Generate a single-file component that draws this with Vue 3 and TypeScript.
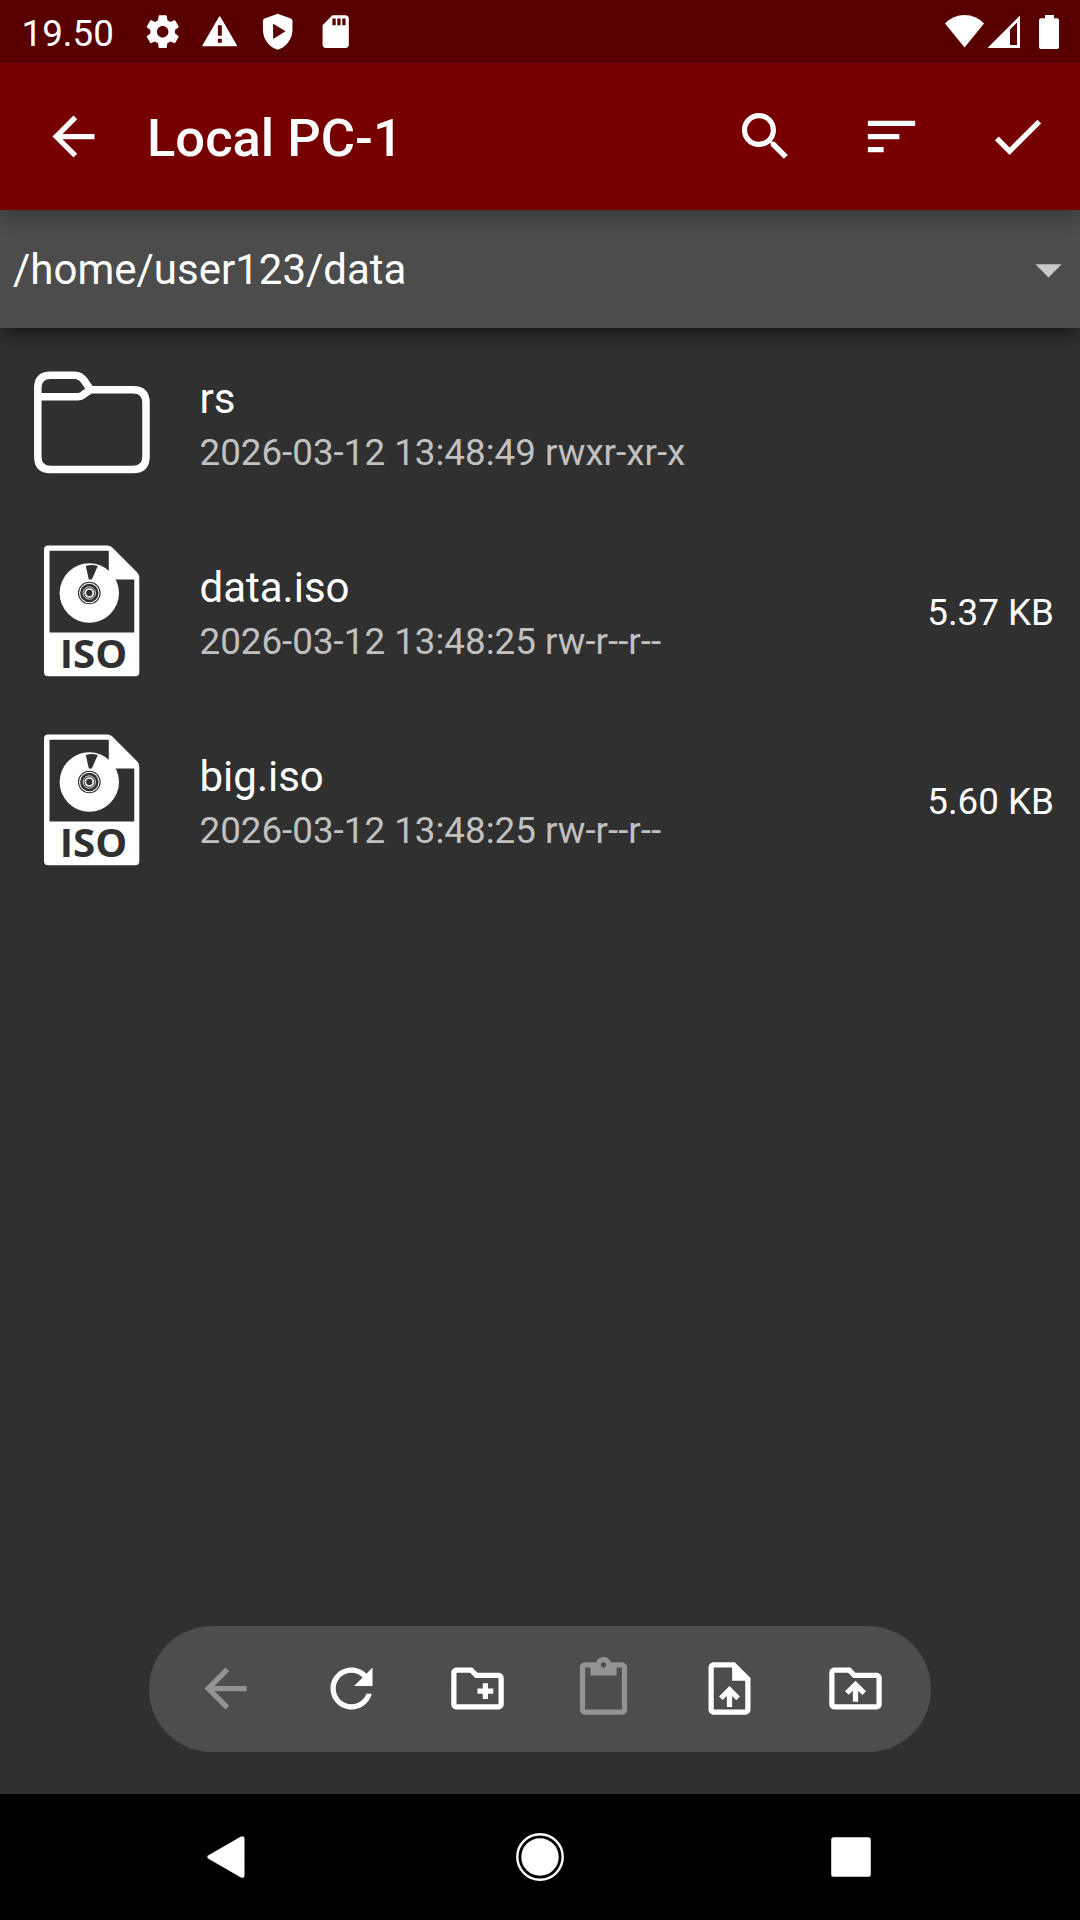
<script setup lang="ts">
interface FileEntry {
  name: string
  details: string
  size?: string
  kind: 'folder' | 'iso'
}

interface Tool {
  label: string
  path: string
  disabled?: boolean
}

const entries: FileEntry[] = [
  { name: 'rs', details: '2026-03-12 13:48:49 rwxr-xr-x', kind: 'folder' },
  { name: 'data.iso', details: '2026-03-12 13:48:25 rw-r--r--', size: '5.37 KB', kind: 'iso' },
  { name: 'big.iso', details: '2026-03-12 13:48:25 rw-r--r--', size: '5.60 KB', kind: 'iso' },
]

const arrowBack = 'M20 11H7.83l5.59-5.59L12 4l-8 8 8 8 1.41-1.41L7.83 13H20v-2z'

const actions: Tool[] = [
  {
    label: 'Search',
    path: 'M15.5 14h-.79l-.28-.27C15.41 12.59 16 11.11 16 9.5 16 5.91 13.09 3 9.5 3S3 5.91 3 9.5 5.91 16 9.5 16c1.61 0 3.09-.59 4.23-1.57l.27.28v.79l5 4.99L20.49 19l-4.99-5zm-6 0C7.01 14 5 11.99 5 9.5S7.01 5 9.5 5 14 7.01 14 9.5 11.99 14 9.5 14z',
  },
  { label: 'Sort', path: 'M3 18h6v-2H3v2zM3 6v2h18V6H3zm0 7h12v-2H3v2z' },
  { label: 'Done', path: 'M9 16.17L4.83 12l-1.42 1.41L9 19 21 7l-1.41-1.41z' },
]

const tools: Tool[] = [
  { label: 'Back', path: arrowBack, disabled: true },
  {
    label: 'Refresh',
    path: 'M17.65 6.35C16.2 4.9 14.21 4 12 4c-4.42 0-7.99 3.58-7.99 8s3.57 8 7.99 8c3.73 0 6.84-2.55 7.73-6h-2.08c-.82 2.33-3.04 4-5.65 4-3.31 0-6-2.69-6-6s2.69-6 6-6c1.66 0 3.14.69 4.22 1.78L13 11h7V4l-2.35 2.35z',
  },
  {
    label: 'New folder',
    path: 'M20 6h-8l-2-2H4c-1.11 0-1.99.89-1.99 2L2 18c0 1.11.89 2 2 2h16c1.11 0 2-.89 2-2V8c0-1.11-.89-2-2-2zm0 12H4V6h5.17l2 2H20v10zm-8-4h2v2h2v-2h2v-2h-2v-2h-2v2h-2z',
  },
  {
    label: 'Paste',
    disabled: true,
    path: 'M19 2h-4.18C14.4.84 13.3 0 12 0c-1.3 0-2.4.84-2.82 2H5c-1.1 0-2 .9-2 2v16c0 1.1.9 2 2 2h14c1.1 0 2-.9 2-2V4c0-1.1-.9-2-2-2zm-7 0c.55 0 1 .45 1 1s-.45 1-1 1-1-.45-1-1 .45-1 1-1zm7 18H5V4h2v3h10V4h2v16z',
  },
  {
    label: 'Upload file',
    path: 'M14 2H6c-1.1 0-1.99.9-1.99 2L4 20c0 1.1.89 2 1.99 2H18c1.1 0 2-.9 2-2V8l-6-6zm4 18H6V4h7v5h5v11zM8 15.01l1.41 1.41L11 14.84V19h2v-4.16l1.59 1.59L16 15.01 12.01 11 8 15.01z',
  },
  {
    label: 'Upload folder',
    path: 'M20 6h-8l-2-2H4c-1.1 0-1.99.9-1.99 2L2 18c0 1.1.9 2 2 2h16c1.1 0 2-.9 2-2V8c0-1.1-.9-2-2-2zm0 12H4V6h5.17l2 2H20v10zM9.41 14.42L11 12.84V17h2v-4.16l1.59 1.59L16 13.01 12.01 9 8 13.01l1.41 1.41z',
  },
]
</script>

<template>
  <div class="screen">
    <header class="status">
      <span class="clock">19.50</span>
      <div class="notices">
        <svg viewBox="0 0 24 24"><path d="M19.43 12.98c.04-.32.07-.64.07-.98s-.03-.66-.07-.98l2.11-1.65c.19-.15.24-.42.12-.64l-2-3.46c-.12-.22-.39-.3-.61-.22l-2.49 1c-.52-.4-1.08-.73-1.69-.98l-.38-2.65C14.46 2.18 14.25 2 14 2h-4c-.25 0-.46.18-.49.42l-.38 2.65c-.61.25-1.17.59-1.69.98l-2.49-1c-.23-.09-.49 0-.61.22l-2 3.46c-.13.22-.07.49.12.64l2.11 1.65c-.04.32-.07.65-.07.98s.03.66.07.98l-2.11 1.65c-.19.15-.24.42-.12.64l2 3.46c.12.22.39.3.61.22l2.49-1c.52.4 1.08.73 1.69.98l.38 2.65c.03.24.24.42.49.42h4c.25 0 .46-.18.49-.42l.38-2.65c.61-.25 1.17-.59 1.69-.98l2.49 1c.23.09.49 0 .61-.22l2-3.46c.12-.22.07-.49-.12-.64l-2.11-1.65zM12 15.5c-1.93 0-3.5-1.57-3.5-3.5s1.57-3.5 3.5-3.5 3.5 1.57 3.5 3.5-1.57 3.5-3.5 3.5z" /></svg>
        <svg viewBox="0 0 24 24"><path fill-rule="evenodd" d="M1.8 20.9q-.6 0-.3-.6L11.6 2.9q.4-.6.8 0l10.1 17.4q.3.6-.3.6zM10.9 8.1v6.4h2.4V8.1zM10.9 16.3v2.5h2.4v-2.5z" /></svg>
        <svg viewBox="0 0 24 24"><path fill-rule="evenodd" d="M12 1L4 4Q3 4.4 3 5.4V11c0 5.5 3.8 10.6 9 12 5.2-1.4 9-6.5 9-12V5.4q0-1-1-1.4zM9.200 7.200v9.200L16.800 11.800z" /></svg>
        <svg viewBox="0 0 24 24"><path d="M18 2h-8L4.020 8 4 20c0 1.100.9 2 2 2h12c1.100 0 2-.9 2-2V4c0-1.100-.9-2-2-2zm-6 6h-2V4h2v4zm3 0h-2V4h2v4zm3 0h-2V4h2v4z" /></svg>
      </div>
      <svg class="radio" viewBox="0 0 116 36">
        <path d="M0 9.500Q8 1 19.500 1T39 9.500L19.500 33.500z" />
        <path fill-rule="evenodd" d="M42.500 34L75 1.500V34zM65 15.500V31h7V8.500z" />
        <path d="M100 1h9v3.200h3q2 0 2 2V33q0 2-2 2H96q-2 0-2-2V6.200q0-2 2-2h4z" />
      </svg>
    </header>

    <nav class="appbar">
      <svg class="icon" viewBox="0 0 24 24" aria-label="Back"><path :d="arrowBack" /></svg>
      <h1>Local PC-1</h1>
      <div class="actions">
        <svg v-for="a in actions" :key="a.label" class="icon" viewBox="0 0 24 24" :aria-label="a.label">
          <path :d="a.path" />
        </svg>
      </div>
    </nav>

    <div class="pathbar">
      <span>/home/user123/data</span>
      <svg class="icon caret" viewBox="0 0 24 24"><path d="M7 10l5 5 5-5z" /></svg>
    </div>

    <main class="list">
      <div v-for="e in entries" :key="e.name" class="row">
        <svg v-if="e.kind === 'folder'" class="kind" viewBox="0 0 144 144">
          <g fill="none" stroke="#fff" stroke-width="7.500" stroke-linejoin="round">
            <path d="M18.800 36V106.500Q18.800 119.500 31.500 119.500H114Q127 119.500 127 106.500V52.700Q127 39.700 114 39.700H71.500L65.500 31Q61.500 25.200 55.500 25.200H31.500Q18.800 25.200 18.800 38" />
            <path d="M18.800 46.800H58.500Q61.500 46.800 64 44.900L71.500 39.700" />
          </g>
        </svg>
        <svg v-else class="kind" viewBox="4.700 0 144 144">
          <path fill="#fff" fill-rule="evenodd" d="M30 6.500H93Q96 6.500 98 8.500L122.500 33Q125 35.500 125 38.500V133Q125 137.300 121 137.300H34Q29.700 137.300 29.700 133V10.500Q29.700 6.500 34 6.500zM35.200 11.800V93.500H120V40.500H94.500V11.800z" />
          <circle cx="75" cy="54" r="29.700" fill="#fff" />
          <path d="M71.500 27Q77.500 25 83.500 27L77.500 40.500H74.500z" fill="#303030" />
          <circle cx="75" cy="54" r="10.800" fill="none" stroke="#303030" stroke-width="1.100" />
          <circle cx="75" cy="54" r="9.200" fill="#303030" />
          <circle cx="75" cy="54" r="6.200" fill="none" stroke="#fff" stroke-width=".8" />
          <circle cx="75" cy="54" r="4" fill="none" stroke="#fff" stroke-width="1.700" />
          <text x="45.500" y="129.200" textLength="67.500" lengthAdjust="spacingAndGlyphs">ISO</text>
        </svg>
        <div class="info">
          <div class="name">{{ e.name }}</div>
          <div class="details">{{ e.details }}</div>
        </div>
        <div v-if="e.size" class="size">{{ e.size }}</div>
      </div>
    </main>

    <div class="toolbar">
      <svg
        v-for="t in tools"
        :key="t.label"
        class="icon"
        :class="{ disabled: t.disabled }"
        viewBox="0 0 24 24"
        :aria-label="t.label"
      >
        <path :d="t.path" />
      </svg>
    </div>

    <footer class="navbar">
      <svg viewBox="0 0 48 48"><path d="M6.500 22.200L38.500 3.700Q42.500 2 42.500 6V42Q42.500 46 38.500 44.300L6.500 25.800Q4 24 6.500 22.200z" /></svg>
      <svg viewBox="0 0 48 48">
        <circle cx="24" cy="24" r="22.700" fill="none" stroke="#fff" stroke-width="2.400" />
        <circle cx="24" cy="24" r="18.700" />
      </svg>
      <svg viewBox="0 0 48 48"><rect x="3.200" y="4.200" width="39.600" height="39.600" rx="2.500" /></svg>
    </footer>
  </div>
</template>

<style>
body {
  background: #303030;
}
</style>

<style scoped>
.screen {
  display: flex;
  flex-direction: column;
  width: 1080px;
  height: 1920px;
  overflow: hidden;
  background: #303030;
  color: #fff;
  font-family: Roboto, sans-serif;
}

svg {
  display: block;
  flex: none;
  fill: #fff;
}

.icon {
  width: 63px;
  height: 63px;
}

.status {
  display: flex;
  align-items: center;
  flex: none;
  height: 63px;
  box-sizing: border-box;
  padding: 0 19px 0 21.5px;
  background: #580000;
}

.clock {
  width: 121px;
  padding-top: 3px;
  font-size: 36.75px;
  line-height: 43px;
}

.notices {
  display: flex;
  gap: 18.6px;
}

.notices svg {
  width: 39.4px;
  height: 39.4px;
}

.radio {
  width: 116px;
  height: 36px;
  margin-left: auto;
}

.appbar {
  position: relative;
  z-index: 2;
  display: flex;
  align-items: center;
  flex: none;
  height: 147px;
  box-sizing: border-box;
  padding: 0 31.5px 0 42px;
  background: #760000;
  box-shadow: 0 8px 20px -3px rgba(0, 0, 0, 0.32);
}

h1 {
  margin: 0 0 0 42px;
  padding-top: 3px;
  font-size: 52.5px;
  font-weight: 500;
  line-height: 62px;
}

.actions {
  display: flex;
  gap: 63px;
  margin-left: auto;
}

.pathbar {
  position: relative;
  z-index: 1;
  display: flex;
  align-items: center;
  justify-content: space-between;
  flex: none;
  height: 118px;
  box-sizing: border-box;
  padding-left: 13px;
  background: #4c4c4c;
  box-shadow: 0 7px 18px -3px rgba(0, 0, 0, 0.65);
  font-size: 42px;
}

.caret {
  fill: #c9c9c9;
}

.list {
  flex: 1;
}

.row {
  display: flex;
  align-items: center;
  height: 189px;
  box-sizing: border-box;
  padding: 0 26px 0 19px;
}

.kind {
  width: 144px;
  height: 144px;
  margin-bottom: 1px;
}

.kind text {
  fill: #303030;
  font: 700 40px 'Open Sans', sans-serif;
}

.info {
  flex: 1;
  margin-left: 36.5px;
  padding-top: 2px;
}

.name {
  font-size: 42px;
  line-height: 50px;
}

.details {
  margin-top: 7px;
  color: #c1c1c1;
  font-size: 36.75px;
  line-height: 43px;
}

.size {
  padding-top: 2px;
  font-size: 36.75px;
}

.toolbar {
  display: flex;
  align-items: center;
  justify-content: space-between;
  flex: none;
  width: 782px;
  height: 126px;
  box-sizing: border-box;
  margin: 0 auto 42px;
  padding: 0 44px 0.5px 45px;
  border-radius: 63px;
  background: #4d4d4d;
}

.disabled {
  fill: #939393;
}

.navbar {
  display: flex;
  align-items: center;
  justify-content: space-between;
  flex: none;
  height: 126px;
  box-sizing: border-box;
  padding: 0 204px;
  background: #000;
}

.navbar svg {
  width: 48px;
  height: 48px;
}

.navbar svg:first-child {
  margin-left: -2px;
  margin-right: 2px;
}
</style>
